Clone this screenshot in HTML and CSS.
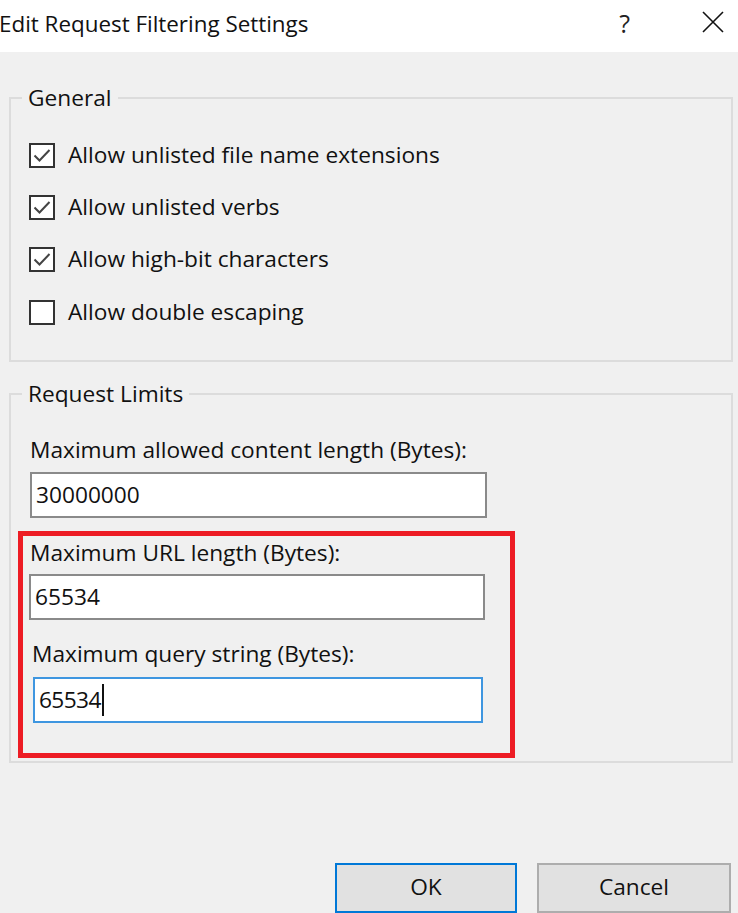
FILE: index.html
```html
<!DOCTYPE html>
<html>
<head>
<meta charset="utf-8">
<link rel="stylesheet" href="styles.css">
</head>
<body>
<div class="dialog">
  <div class="titlebar">
    <span class="title">Edit Request Filtering Settings</span>
    <span class="help">?</span>
    <svg class="close" width="22" height="22" viewBox="0 0 22 22"><path d="M1 1 L21 21 M21 1 L1 21" stroke="#111" stroke-width="1.6" fill="none"/></svg>
  </div>
  <div class="body">
    <fieldset class="group general">
      <legend>General</legend>
      <div class="check"><span class="box"><svg width="22" height="21" viewBox="0 0 22 21"><path d="M3.5 10.5 L8.5 15.5 L18.5 5" stroke="#444" stroke-width="2" fill="none"/></svg></span><span>Allow unlisted file name extensions</span></div>
      <div class="check"><span class="box"><svg width="22" height="21" viewBox="0 0 22 21"><path d="M3.5 10.5 L8.5 15.5 L18.5 5" stroke="#444" stroke-width="2" fill="none"/></svg></span><span>Allow unlisted verbs</span></div>
      <div class="check"><span class="box"><svg width="22" height="21" viewBox="0 0 22 21"><path d="M3.5 10.5 L8.5 15.5 L18.5 5" stroke="#444" stroke-width="2" fill="none"/></svg></span><span>Allow high-bit characters</span></div>
      <div class="check"><span class="box"></span><span>Allow double escaping</span></div>
    </fieldset>
    <fieldset class="group limits">
      <legend>Request Limits</legend>
      <div class="label l1">Maximum allowed content length (Bytes):</div>
      <div class="field f1">30000000</div>
      <div class="highlight">
        <div class="label l2">Maximum URL length (Bytes):</div>
        <div class="field f2">65534</div>
        <div class="label l3">Maximum query string (Bytes):</div>
        <div class="field f3 focused">65534<span class="caret"></span></div>
      </div>
    </fieldset>
    <div class="buttons">
      <div class="btn default">OK</div>
      <div class="btn">Cancel</div>
    </div>
  </div>
</div>
</body>
</html>
```
FILE: styles.css
```css
html, body {
  margin: 0;
  padding: 0;
}
body {
  width: 738px;
  height: 913px;
  overflow: hidden;
  background: #f0f0f0;
  font-family: "Open Sans", "Noto Sans", sans-serif;
  font-size: 22.7px;
  color: #111;
}
.dialog {
  width: 738px;
  height: 913px;
  display: flex;
  flex-direction: column;
}
.titlebar {
  height: 52px;
  background: #ffffff;
  display: flex;
  align-items: center;
  flex-shrink: 0;
}
.title {
  font-size: 22.4px;
  margin-left: -1px;
  margin-top: -6px;
  color: #111;
}
.help {
  margin-left: auto;
  font-size: 25px;
  margin-top: -6px;
  color: #222;
}
.close {
  margin-left: 72px;
  margin-right: 14px;
  margin-top: -8px;
}
.body {
  display: flex;
  flex-direction: column;
  padding: 0 5px 0 9px;
  flex: 1;
}
.group {
  margin: 0;
  border: 2px solid #dcdcdc;
  padding: 0;
  min-width: 0;
}
.group legend {
  padding: 0 6px;
  line-height: 28px;
}
.general {
  margin-top: 32px;
  height: 278px;
  box-sizing: border-box;
  padding: 30px 0 0 18px;
  display: flex;
  flex-direction: column;
  gap: 26.4px;
}
.general legend {
  margin-left: -7px;
}
.check {
  display: flex;
  align-items: center;
  gap: 13px;
  height: 26px;
}
.box {
  width: 26px;
  height: 25px;
  box-sizing: border-box;
  border: 2px solid #333;
  background: #fff;
  display: flex;
  align-items: center;
  justify-content: center;
  flex-shrink: 0;
}
.check .box + span {
  margin-top: -2px;
}
.limits {
  margin-top: 18px;
  height: 383px;
  box-sizing: border-box;
  padding: 28px 0 0 8px;
}
.limits legend {
  margin-left: 3px;
}
.label {
  line-height: 28px;
  padding-left: 11px;
}
.field {
  box-sizing: border-box;
  height: 46px;
  border: 2px solid #8a8a8a;
  background: #fff;
  padding-left: 4px;
  line-height: 40px;
  display: flex;
  align-items: center;
  color: #111;
}
.f1 {
  margin-top: 8px;
  margin-left: 11px;
  width: 457px;
}
.highlight {
  margin-top: 13px;
  margin-left: -1px;
  width: 497px;
  height: 227px;
  box-sizing: border-box;
  border: 5px solid #ed1c24;
  padding-top: 3px;
}
.highlight .label {
  padding-left: 7px;
}
.f2 {
  margin-top: 7px;
  margin-left: 6px;
  width: 456px;
}
.l3 {
  margin-top: 20px;
  padding-left: 9px !important;
}
.f3 {
  margin-top: 9px;
  margin-left: 10px;
  width: 450px;
  border-color: #3e96e0;
  letter-spacing: -0.6px;
}
.caret {
  display: inline-block;
  width: 2px;
  height: 32px;
  background: #111;
  margin-left: 1px;
}
.buttons {
  margin-top: auto;
  display: flex;
  gap: 20px;
  justify-content: flex-end;
  padding-right: 2px;
  height: 50px;
}
.btn {
  box-sizing: border-box;
  width: 194px;
  height: 50px;
  border: 2px solid #adadad;
  background: #e1e1e1;
  display: flex;
  align-items: center;
  justify-content: center;
  padding-bottom: 3px;
  color: #111;
}
.btn.default {
  width: 182px;
  border-color: #0078d7;
}
```
